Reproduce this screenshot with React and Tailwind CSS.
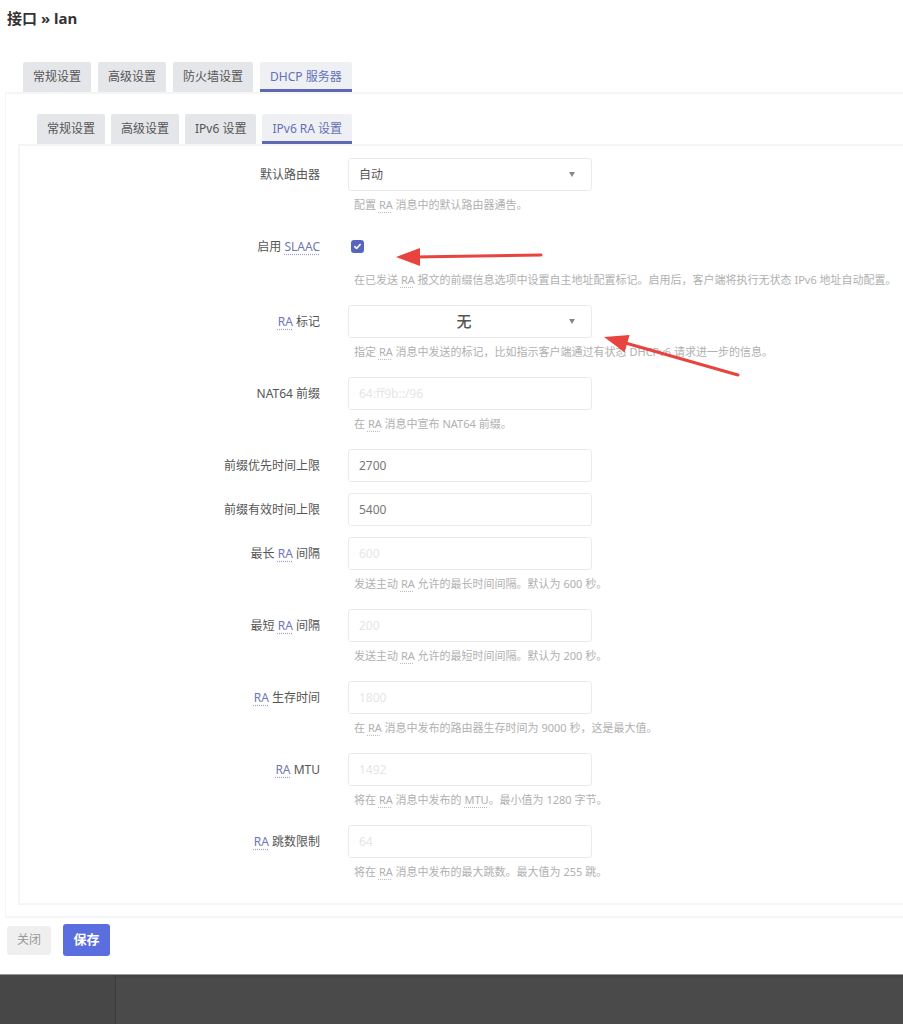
import React from "react";

const font = "font-['Noto_Sans','Noto_Sans_CJK_SC',sans-serif]";

function Abbr({ children, label }) {
  return (
    <span
      className={
        label
          ? "text-[#6f77b5] underline decoration-dotted decoration-[#9aa0cc] underline-offset-[3px]"
          : "underline decoration-dotted decoration-[#bbb] underline-offset-[3px]"
      }
    >
      {children}
    </span>
  );
}

function Tab({ children, active }) {
  return (
    <div
      className={
        "h-[30px] px-[10px] flex items-center text-[12px] rounded-t-[2px] " +
        (active
          ? "bg-[#eef0f3] text-[#6470b8] border-b-[3px] border-[#5e68b3] pt-[3px]"
          : "bg-[#e4e6e9] text-[#555]")
      }
    >
      {children}
    </div>
  );
}

function Row({ label, desc, children, descTop = "mt-[6px]" }) {
  return (
    <div className={"flex " + (desc ? "mb-[17px]" : "mb-[11px]")}>
      <div className="w-[300px] h-[33px] flex items-center justify-end text-[12px] text-[#555] whitespace-nowrap">
        <span>{label}</span>
      </div>
      <div className="ml-[28px]">
        {children}
        {desc && (
          <div className={descTop + " pl-[6px] text-[11px] leading-[16px] text-[#b0b0b0] whitespace-nowrap"}>
            {desc}
          </div>
        )}
      </div>
    </div>
  );
}

function Input({ value, placeholder }) {
  return (
    <div className="w-[244px] h-[33px] border border-[#ebebeb] rounded-[3px] bg-white flex items-center pl-[10px] text-[12px]">
      {value ? (
        <span className="text-[#777]">{value}</span>
      ) : (
        <span className="text-[#e6e6e6]">{placeholder}</span>
      )}
    </div>
  );
}

function Select({ value, center }) {
  return (
    <div className="w-[244px] h-[33px] border border-[#ebebeb] rounded-[3px] bg-white flex items-center pl-[10px] pr-[16px]">
      <span
        className={
          center
            ? "flex-1 text-center text-[15px] font-medium text-[#555]"
            : "flex-1 text-[12px] text-[#555]"
        }
      >
        {value}
      </span>
      <span className="w-0 h-0 border-l-[3.5px] border-r-[3.5px] border-t-[5px] border-l-transparent border-r-transparent border-t-[#888]" />
    </div>
  );
}

function Checkbox() {
  return (
    <div className="h-[33px] flex items-center pl-[3px]">
      <div className="w-[13px] h-[13px] rounded-[3px] bg-[#5865c0] flex items-center justify-center">
        <svg width="9" height="9" viewBox="0 0 10 10" fill="none">
          <path d="M2 5.2l2 2 4-4.4" stroke="white" strokeWidth="1.8" strokeLinecap="round" strokeLinejoin="round" />
        </svg>
      </div>
    </div>
  );
}

export default function App() {
  return (
    <div className={"relative min-h-screen flex flex-col bg-white " + font}>
      <div className="h-[974px] flex flex-col">
        <h2 className="pl-[7px] pt-[8px] text-[15px] leading-[20px] font-bold text-[#333]">接口 » lan</h2>

        <div className="mt-[34px] ml-[23px] flex gap-[7px]">
          <Tab>常规设置</Tab>
          <Tab>高级设置</Tab>
          <Tab>防火墙设置</Tab>
          <Tab active>DHCP 服务器</Tab>
        </div>

        {/* outer panel */}
        <div className="ml-[5px] border-l border-t-[2px] border-b-[2px] border-[#f5f5f5] pl-[12px] pt-[20px] pb-[11px]">
          <div className="ml-[19px] flex gap-[6px]">
            <Tab>常规设置</Tab>
            <Tab>高级设置</Tab>
            <Tab>IPv6 设置</Tab>
            <Tab active>IPv6 RA 设置</Tab>
          </div>

          {/* inner panel */}
          <div className="border-l-[2px] border-t-[2px] border-b-[2px] border-[#f5f5f5] pt-[12px] pb-[6px]">
            <Row label="默认路由器" desc={<>配置 <Abbr>RA</Abbr> 消息中的默认路由器通告。</>}>
              <Select value="自动" />
            </Row>
            <Row
              label={<>启用 <Abbr label>SLAAC</Abbr></>}
              descTop="mt-[9px]"
              desc={<>在已发送 <Abbr>RA</Abbr> 报文的前缀信息选项中设置自主地址配置标记。启用后，客户端将执行无状态 IPv6 地址自动配置。</>}
            >
              <Checkbox />
            </Row>
            <Row
              label={<><Abbr label>RA</Abbr> 标记</>}
              desc={<>指定 <Abbr>RA</Abbr> 消息中发送的标记，比如指示客户端通过有状态 DHCPv6 请求进一步的信息。</>}
            >
              <Select value="无" center />
            </Row>
            <Row label="NAT64 前缀" desc={<>在 <Abbr>RA</Abbr> 消息中宣布 NAT64 前缀。</>}>
              <Input placeholder="64:ff9b::/96" />
            </Row>
            <Row label="前缀优先时间上限">
              <Input value="2700" />
            </Row>
            <Row label="前缀有效时间上限">
              <Input value="5400" />
            </Row>
            <Row
              label={<>最长 <Abbr label>RA</Abbr> 间隔</>}
              desc={<>发送主动 <Abbr>RA</Abbr> 允许的最长时间间隔。默认为 600 秒。</>}
            >
              <Input placeholder="600" />
            </Row>
            <Row
              label={<>最短 <Abbr label>RA</Abbr> 间隔</>}
              desc={<>发送主动 <Abbr>RA</Abbr> 允许的最短时间间隔。默认为 200 秒。</>}
            >
              <Input placeholder="200" />
            </Row>
            <Row
              label={<><Abbr label>RA</Abbr> 生存时间</>}
              desc={<>在 <Abbr>RA</Abbr> 消息中发布的路由器生存时间为 9000 秒，这是最大值。</>}
            >
              <Input placeholder="1800" />
            </Row>
            <Row
              label={<><Abbr label>RA</Abbr> MTU</>}
              desc={<>将在 <Abbr>RA</Abbr> 消息中发布的 <Abbr>MTU</Abbr>。最小值为 1280 字节。</>}
            >
              <Input placeholder="1492" />
            </Row>
            <Row
              label={<><Abbr label>RA</Abbr> 跳数限制</>}
              desc={<>将在 <Abbr>RA</Abbr> 消息中发布的最大跳数。最大值为 255 跳。</>}
            >
              <Input placeholder="64" />
            </Row>
          </div>
        </div>

        <div className="mt-[6px] ml-[7px] flex items-center gap-[12px]">
          <button className="w-[44px] h-[29px] rounded-[3px] bg-[#efefef] text-[12px] text-[#999]">关闭</button>
          <button className="w-[47px] h-[32px] rounded-[3px] bg-[#5a6ee0] text-[13px] font-bold text-white">保存</button>
        </div>
      </div>

      {/* bottom dark bar */}
      <div className="h-[50px] flex border-t border-[#9a9a9a]">
        <div className="w-[116px] bg-[#474747] border-r border-[#3c3c3c]" />
        <div className="flex-1 bg-[#4a4a4a] border-t-[3px] border-[#444]" />
      </div>

      {/* red annotation arrows */}
      <svg className="absolute left-0 top-0 pointer-events-none" width="903" height="1024">
        <line x1="541" y1="255" x2="414" y2="257" stroke="#e8433e" strokeWidth="3" strokeLinecap="round" />
        <polygon points="396,257 420,248 420,266" fill="#e8433e" />
        <line x1="738" y1="375" x2="622" y2="342" stroke="#e8433e" strokeWidth="3" strokeLinecap="round" />
        <polygon points="604,337 629.6,334.9 624.6,352.3" fill="#e8433e" />
      </svg>
    </div>
  );
}
